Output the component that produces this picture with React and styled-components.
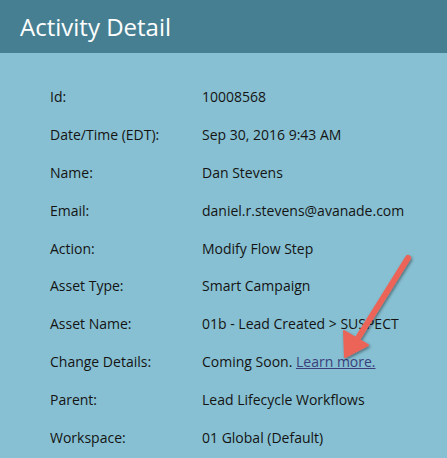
import React from "react";
import styled, { createGlobalStyle } from "styled-components";

const Global = createGlobalStyle`
  html, body { margin: 0; padding: 0; background: #87c0d2; }
  body { font-family: "Open Sans", "Noto Sans", sans-serif; }
`;

const Page = styled.div`
  position: relative;
  width: 447px;
  height: 458px;
  overflow: hidden;
  background: #87c0d2;
`;

const Header = styled.header`
  height: 53px;
  background: #477f92;
  display: flex;
  align-items: center;
  padding-left: 20px;
  box-sizing: border-box;
`;

const Title = styled.h1`
  margin: 0;
  font-size: 24px;
  font-weight: 400;
  color: #ffffff;
`;

const Details = styled.dl`
  margin: 0;
  padding: 25px 0 0 50px;
  display: grid;
  grid-template-columns: 152px 1fr;
  grid-auto-rows: 37.8px;
  align-items: center;
  font-size: 14px;
  color: #141414;
`;

const Label = styled.dt`
  margin: 0;
`;

const Value = styled.dd`
  margin: 0;
  white-space: nowrap;
`;

const Link = styled.a`
  color: #3a3f7c;
  text-decoration: underline;
`;

const Arrow = styled.svg`
  position: absolute;
  left: 320px;
  top: 245px;
  overflow: visible;
`;

const rows = [
  ["Id:", "10008568"],
  ["Date/Time (EDT):", "Sep 30, 2016 9:43 AM"],
  ["Name:", "Dan Stevens"],
  ["Email:", "daniel.r.stevens@avanade.com"],
  ["Action:", "Modify Flow Step"],
  ["Asset Type:", "Smart Campaign"],
  ["Asset Name:", "01b - Lead Created > SUSPECT"],
  ["Change Details:", null],
  ["Parent:", "Lead Lifecycle Workflows"],
  ["Workspace:", "01 Global (Default)"],
];

export default function App() {
  return (
    <Page>
      <Global />
      <Header>
        <Title>Activity Detail</Title>
      </Header>
      <Details>
        {rows.map(([l, v]) => (
          <React.Fragment key={l}>
            <Label>{l}</Label>
            <Value>
              {v ?? (
                <>
                  Coming Soon. <Link href="#">Learn more.</Link>
                </>
              )}
            </Value>
          </React.Fragment>
        ))}
      </Details>
      <Arrow width="110" height="130" viewBox="0 0 110 130">
        <defs>
          <filter id="sh" x="-30%" y="-30%" width="160%" height="160%">
            <feDropShadow dx="1" dy="1.5" stdDeviation="1.5" floodColor="#000" floodOpacity="0.45" />
          </filter>
        </defs>
        <g filter="url(#sh)">
          <line x1="88" y1="13" x2="38" y2="93" stroke="#ec6459" strokeWidth="6" strokeLinecap="round" />
          <polygon points="25,112 24,86 48,100" fill="#ec6459" stroke="#ec6459" strokeWidth="2" strokeLinejoin="round" />
        </g>
      </Arrow>
    </Page>
  );
}
